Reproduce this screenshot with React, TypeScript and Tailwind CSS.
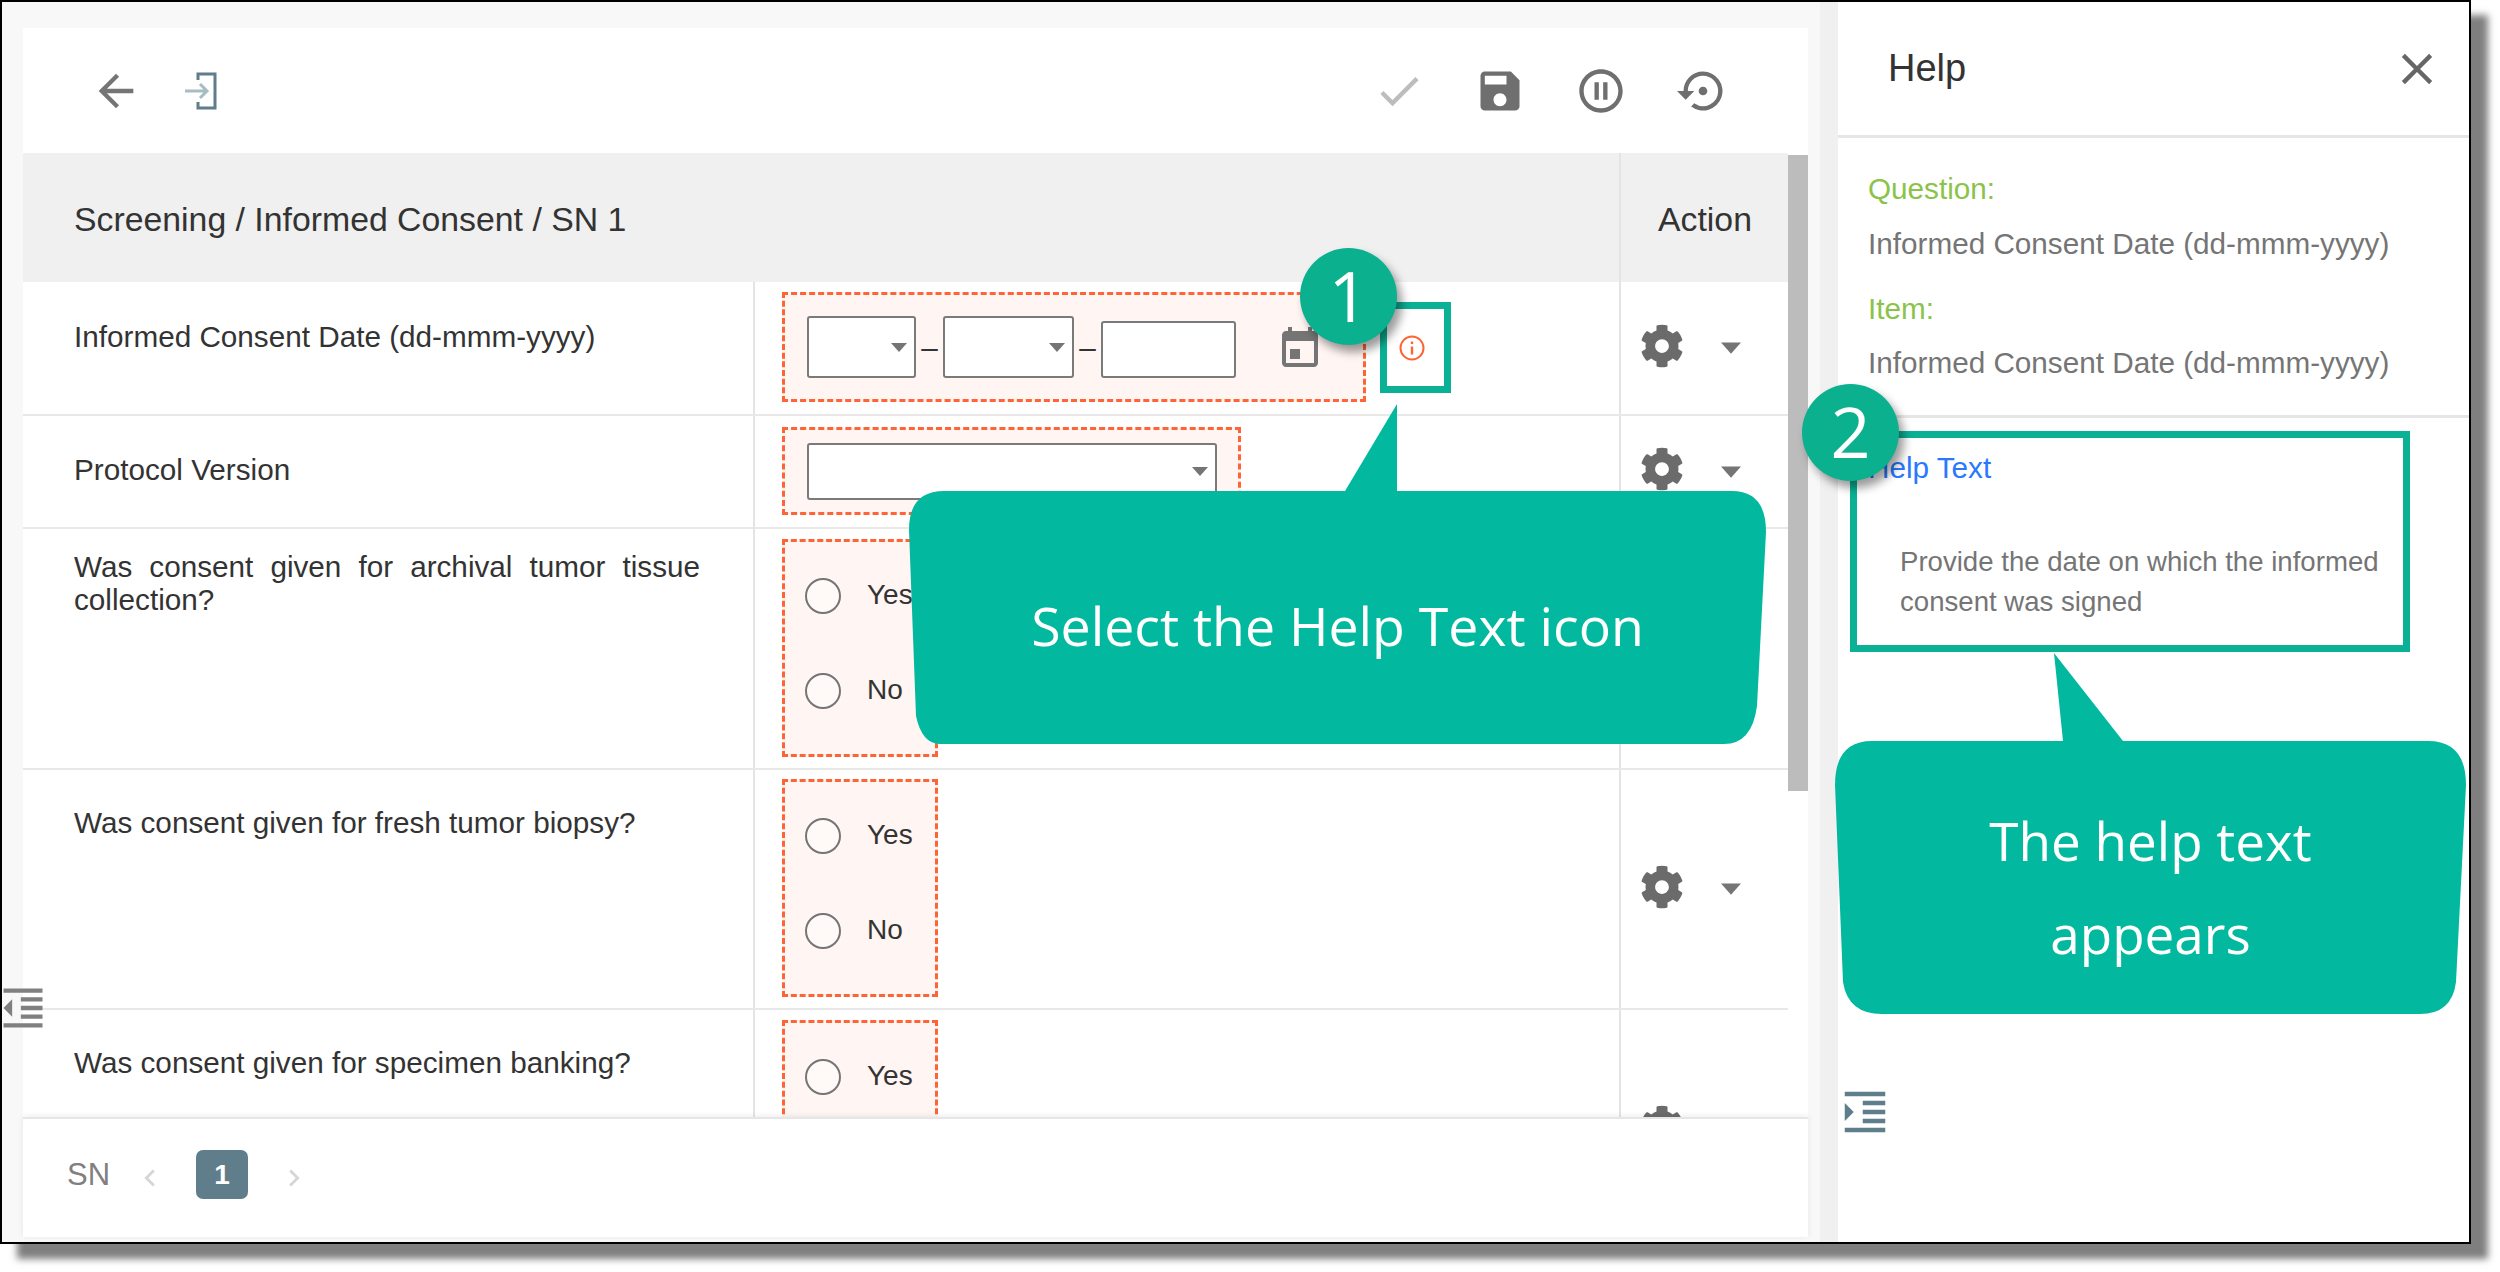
import React from 'react';
import { FaCog } from 'react-icons/fa';
import {
  MdArrowBack,
  MdCheck,
  MdChevronLeft,
  MdChevronRight,
  MdClose,
  MdFormatIndentDecrease,
  MdFormatIndentIncrease,
  MdPauseCircleOutline,
  MdSave,
  MdSettingsBackupRestore,
} from 'react-icons/md';

const Caret = ({ className = 'w-[16px] h-[9px]' }: { className?: string }) => (
  <svg viewBox="0 0 16 9" className={`${className} fill-[#757575]`}>
    <path d="M0 0h16L8 9z" />
  </svg>
);

const SelectBox = ({ className }: { className: string }) => (
  <div className={`flex items-center justify-end rounded-[3px] border-2 border-[#7a7a7a] bg-white pr-[7px] ${className}`}>
    <Caret />
  </div>
);

const LoginIcon = () => (
  <svg viewBox="0 0 33 38" className="h-[38px] w-[33px]" fill="none">
    <path d="M1 19h21M16 12l7 7-7 7" stroke="#a9bcc4" strokeWidth="3" />
    <path d="M14 8V2h17v34H14v-6" stroke="#5f7d8a" strokeWidth="3" />
  </svg>
);

const CalendarIcon = () => (
  <svg viewBox="3 1 18 20" className="h-[40px] w-[38px] fill-[#757575]">
    <path d="M12 12H7v5h5v-5zM16 1v2H8V1H6v2H5c-1.11 0-1.99.9-1.99 2L3 19c0 1.1.89 2 2 2h14c1.1 0 2-.9 2-2V5c0-1.1-.9-2-2-2h-1V1h-2zm3 18H5V8h14v11z" />
  </svg>
);

const InfoIcon = () => (
  <svg viewBox="0 0 26 26" className="h-[26px] w-[26px]" fill="none" stroke="#ff6437">
    <circle cx="13" cy="13" r="11.5" strokeWidth="2" />
    <path d="M13 11.5v8" strokeWidth="2.4" />
    <path d="M13 6.5v2.6" strokeWidth="2.4" />
  </svg>
);

const ActionCell = () => (
  <div className="flex h-full w-[169px] items-center border-l-2 border-[#e4e4e4] pl-[19px]">
    <FaCog className="-mt-[5px] text-[44px] text-[#6b6b6b]" />
    <Caret className="ml-[37px] h-[12px] w-[20px]" />
  </div>
);

const RadioOption = ({ label }: { label: string }) => (
  <div className="flex h-[36px] items-center gap-[26px]">
    <span className="h-[36px] w-[36px] rounded-full border-2 border-[#757575] bg-white/40" />
    <span className="-mt-[4px] text-[28px] text-[#333]">{label}</span>
  </div>
);

const questionRows = [
  { label: 'Was consent given for archival tumor tissue collection?', height: 'h-[241px]', labelPad: 'pt-[21px]', boxPad: 'mt-[10px]', options: ['Yes', 'No'] },
  { label: 'Was consent given for fresh tumor biopsy?', height: 'h-[240px]', labelPad: 'pt-[36px]', boxPad: 'mt-[9px]', options: ['Yes', 'No'] },
  // the rest of this row is below the fold of the scroll area
  { label: 'Was consent given for specimen banking?', height: 'h-[240px]', labelPad: 'pt-[36px]', boxPad: 'mt-[10px]', options: ['Yes'] },
];

export default function App() {
  return (
    <div className="relative h-[1272px] w-[2500px] overflow-hidden bg-white font-['Liberation_Sans',Arial,sans-serif] text-[29.7px] leading-[33px] text-[#333]">
      {/* screenshot frame */}
      <div className="flex h-[1244px] w-[2471px] border-2 border-black bg-[#f8f8f8] shadow-[17px_15px_7px_rgba(0,0,0,0.5)]">
        <div className="h-full w-[1836px] shrink-0 border-r-[18px] border-[#f0f0f0] pl-[21px] pt-[26px]">
          <div className="flex h-[1209px] w-[1785px] flex-col bg-white">
            {/* toolbar */}
            <div className="flex h-[125px] shrink-0 items-center pl-[67px] pr-[79px] text-[52px]">
              <MdArrowBack className="text-[#757575]" />
              <div className="ml-[42px]">
                <LoginIcon />
              </div>
              <div className="ml-auto flex items-center gap-[49px]">
                <MdCheck className="text-[#bdbdbd]" />
                <MdSave className="text-[#6f6f6f]" />
                <MdPauseCircleOutline className="text-[#6f6f6f]" />
                <MdSettingsBackupRestore className="ml-[1px] text-[#6f6f6f]" />
              </div>
            </div>

            {/* form table */}
            <div className="flex h-[964px] shrink-0">
              <div className="w-[1765px] overflow-hidden">
                <div className="flex h-[129px] items-center bg-[#f0f0f0] text-[33.8px]">
                  <div className="w-[1596px] pl-[51px] pt-[3px]">Screening / Informed Consent / SN 1</div>
                  <div className="flex h-full w-[169px] items-center border-l-2 border-[#e4e4e4] pl-[37px] pt-[3px]">Action</div>
                </div>

                <div className="flex h-[134px] border-b-2 border-[#e8e8e8]">
                  <div className="w-[730px] pl-[51px] pt-[38px]">Informed Consent Date (dd-mmm-yyyy)</div>
                  <div className="flex w-[866px] items-start border-l-2 border-[#e4e4e4]">
                    <div className="ml-[27px] mt-[10px] flex h-[110px] w-[584px] items-center border-[3px] border-dashed border-[#ff6437] bg-[#fff5f2] pl-[22px]">
                      <SelectBox className="h-[62px] w-[109px]" />
                      <span className="flex w-[27px] justify-center">–</span>
                      <SelectBox className="h-[62px] w-[131px]" />
                      <span className="flex w-[27px] justify-center">–</span>
                      <div className="mt-[5px] h-[57px] w-[135px] rounded-[3px] border-2 border-[#7a7a7a] bg-white" />
                      <div className="ml-[45px]">
                        <CalendarIcon />
                      </div>
                    </div>
                    <div className="ml-[33px] mt-[53px]">
                      <InfoIcon />
                    </div>
                  </div>
                  <ActionCell />
                </div>

                <div className="flex h-[113px] border-b-2 border-[#e8e8e8]">
                  <div className="w-[730px] pl-[51px] pt-[37px]">Protocol Version</div>
                  <div className="w-[866px] border-l-2 border-[#e4e4e4]">
                    <div className="ml-[27px] mt-[11px] flex h-[88px] w-[459px] items-center border-[3px] border-dashed border-[#ff6437] bg-[#fff5f2] pl-[22px]">
                      <SelectBox className="h-[57px] w-[410px]" />
                    </div>
                  </div>
                  <ActionCell />
                </div>

                {questionRows.map((row) => (
                  <div key={row.label} className={`flex ${row.height} border-b-2 border-[#e8e8e8]`}>
                    <div className={`w-[730px] pl-[51px] pr-[53px] text-justify ${row.labelPad}`}>{row.label}</div>
                    <div className="w-[866px] border-l-2 border-[#e4e4e4]">
                      <div className={`ml-[27px] flex h-[218px] w-[156px] flex-col gap-[59px] border-[3px] border-dashed border-[#ff6437] bg-[#fff5f2] pl-[20px] pt-[36px] ${row.boxPad}`}>
                        {row.options.map((option) => (
                          <RadioOption key={option} label={option} />
                        ))}
                      </div>
                    </div>
                    <ActionCell />
                  </div>
                ))}
              </div>
              {/* scrollbar */}
              <div className="w-[20px] pt-[2px]">
                <div className="h-[636px] bg-[#bcbcbc]" />
              </div>
            </div>

            {/* pager */}
            <div className="flex h-[120px] shrink-0 items-center border-t-2 border-[#e6e6e6] bg-white pb-[7px] pl-[44px] shadow-[0_-1px_6px_rgba(0,0,0,0.08)]">
              <span className="text-[31px] text-[#808080]">SN</span>
              <MdChevronLeft className="ml-[23px] mt-[6px] text-[34px] text-[#d6d6d6]" />
              <span className="ml-[29px] flex h-[49px] w-[52px] items-center justify-center rounded-[7px] bg-[#607d8b] text-[28px] font-bold text-white">1</span>
              <MdChevronRight className="ml-[29px] mt-[6px] text-[34px] text-[#d6d6d6]" />
            </div>
          </div>
        </div>

        {/* help panel */}
        <div className="h-full grow bg-white">
          <div className="flex h-[136px] items-center justify-between border-b-[3px] border-[#e6e6e6] pl-[50px] pr-[26px]">
            <span className="text-[38px]">Help</span>
            <MdClose className="text-[52px] text-[#666]" />
          </div>
          <div className="h-[280px] border-b-[3px] border-[#e6e6e6] pl-[30px] pt-[34px] text-[#757575]">
            <div className="text-[#8bc34a]">Question:</div>
            <div className="mt-[22px]">Informed Consent Date (dd-mmm-yyyy)</div>
            <div className="mt-[32px] text-[#8bc34a]">Item:</div>
            <div className="mt-[21px]">Informed Consent Date (dd-mmm-yyyy)</div>
          </div>
          <div className="pl-[30px] pt-[33px]">
            <div className="text-[#2979ff]">Help Text</div>
            <div className="mt-[58px] pl-[32px] text-[27.6px] leading-[40px] text-[#757575]">
              Provide the date on which the informed
              <br />
              consent was signed
            </div>
          </div>
          <MdFormatIndentIncrease className="mt-[463px] text-[54px] text-[#607d8b]" />
        </div>
      </div>

      {/* collapsed nav toggle, sits over the page edge */}
      <MdFormatIndentDecrease className="absolute left-[-3px] top-[982px] text-[52px] text-[#808080]" />

      {/* tutorial annotations */}
      <svg viewBox="0 0 2500 1272" className="absolute inset-0 h-[1272px] w-[2500px] fill-[#02b9a0]">
        <path d="M944 491H1345L1397 404V491H1732Q1766 491 1766 532L1757 706Q1752 744 1724 744H940Q922 744 916 716L909 530Q909 491 944 491Z" />
        <path d="M1872 741H2063L2054 653L2123 741H2428Q2466 741 2466 785L2456 982Q2452 1014 2420 1014H1882Q1848 1014 1843 982L1835 785Q1835 741 1872 741Z" />
      </svg>
      <div className="absolute left-[1380px] top-[302px] h-[91px] w-[71px] border-[7px] border-[#0bb195]" />
      <div className="absolute left-[1850px] top-[431px] h-[221px] w-[560px] border-[7px] border-[#0bb195]" />

      <div className="absolute left-[1300px] top-[248px] flex h-[97px] w-[97px] items-center justify-center rounded-full bg-[#0bb08f] pb-[3px] font-['Open_Sans',sans-serif] text-[70px] text-white shadow-[5px_7px_10px_rgba(0,0,0,0.4)]">1</div>
      <div className="absolute left-[1802px] top-[384px] flex h-[97px] w-[97px] items-center justify-center rounded-full bg-[#0bb08f] pb-[3px] font-['Open_Sans',sans-serif] text-[70px] text-white shadow-[5px_7px_10px_rgba(0,0,0,0.4)]">2</div>

      <div className="absolute left-[909px] top-[499px] flex h-[253px] w-[857px] items-center justify-center font-['Open_Sans',sans-serif] text-[53.6px] text-white">Select the Help Text icon</div>
      <div className="absolute left-[1835px] top-[794px] w-[631px] text-center font-['Open_Sans',sans-serif] text-[53px] leading-[93px] text-white">
        The help text
        <br />
        appears
      </div>
    </div>
  );
}
